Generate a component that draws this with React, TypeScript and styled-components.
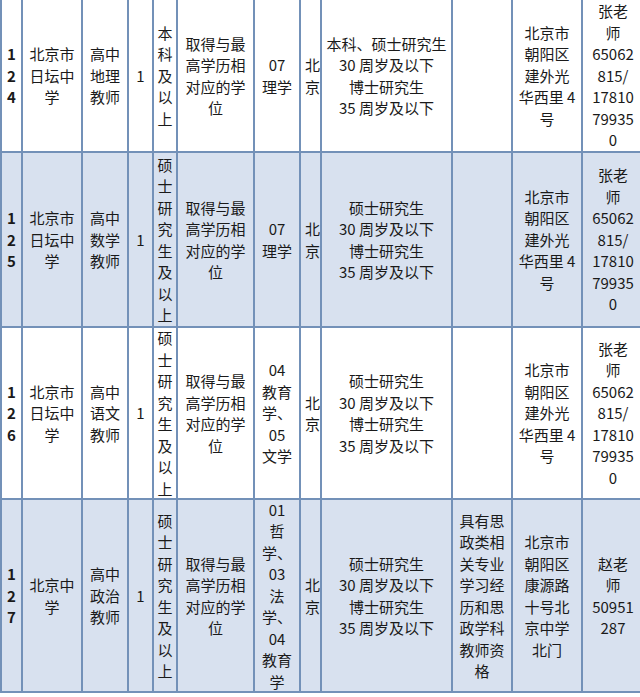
import React from "react";
import styled, { createGlobalStyle } from "styled-components";

const GlobalStyle = createGlobalStyle`
  html, body {
    margin: 0;
    padding: 0;
    background: #ffffff;
    overflow: hidden;
  }
`;

const Sheet = styled.div`
  display: grid;
  grid-template-columns: 21px 60px 46px 25px 24px 77px 46px 21px 131px 60px 70px 62px;
  grid-template-rows: 153px 175px 172px 193px;
  width: 645px;
  border-left: 2px solid #7391b8;
  font-family: "Noto Sans CJK SC", "Noto Sans", sans-serif;
  font-size: 15px;
  line-height: 21.5px;
  color: #1a1a1a;
`;

const Cell = styled.div<{ $shade: boolean; $bold?: boolean; $clip?: boolean }>`
  display: flex;
  align-items: center;
  justify-content: ${({ $clip }) => ($clip ? "flex-start" : "center")};
  padding-left: ${({ $clip }) => ($clip ? "4px" : "0")};
  text-align: ${({ $clip }) => ($clip ? "left" : "center")};
  white-space: pre;
  overflow: hidden;
  background: ${({ $shade }) => ($shade ? "#d8e1ef" : "#ffffff")};
  border-right: 2px solid #7391b8;
  border-bottom: 2px solid #7391b8;
  font-weight: ${({ $bold }) => ($bold ? 700 : 400)};
`;

type Row = string[];

const master = "硕\n士\n研\n究\n生\n及\n以\n上";
const degree = "取得与最\n高学历相\n对应的学\n位";
const age = "硕士研究生\n30 周岁及以下\n博士研究生\n35 周岁及以下";
const riTan = "北京市\n日坛中\n学";
const jianWai = "北京市\n朝阳区\n建外光\n华西里 4\n号";
const zhang = "张老\n师\n65062\n815/\n17810\n79935\n0";

const rows: Row[] = [
  [
    "1\n2\n4",
    riTan,
    "高中\n地理\n教师",
    "1",
    "本\n科\n及\n以\n上",
    degree,
    "07\n理学",
    "北\n京",
    "本科、硕士研究生\n30 周岁及以下\n博士研究生\n35 周岁及以下",
    "",
    jianWai,
    zhang,
  ],
  ["1\n2\n5", riTan, "高中\n数学\n教师", "1", master, degree, "07\n理学", "北\n京", age, "", jianWai, zhang],
  [
    "1\n2\n6",
    riTan,
    "高中\n语文\n教师",
    "1",
    master,
    degree,
    "04\n教育\n学、\n05\n文学",
    "北\n京",
    age,
    "",
    jianWai,
    zhang,
  ],
  [
    "1\n2\n7",
    "北京中\n学",
    "高中\n政治\n教师",
    "1",
    master,
    degree,
    "01\n哲\n学、\n03\n法\n学、\n04\n教育\n学",
    "北\n京",
    age,
    "具有思\n政类相\n关专业\n学习经\n历和思\n政学科\n教师资\n格",
    "北京市\n朝阳区\n康源路\n十号北\n京中学\n北门",
    "赵老\n师\n50951\n287",
  ],
];

const App: React.FC = () => {
  return (
    <>
      <GlobalStyle />
      <Sheet>
        {rows.map((row, r) =>
          row.map((text, c) => (
            <Cell key={`${r}-${c}`} $shade={r % 2 === 1} $bold={c === 0} $clip={c === 7}>
              {text}
            </Cell>
          ))
        )}
      </Sheet>
    </>
  );
};

export default App;
